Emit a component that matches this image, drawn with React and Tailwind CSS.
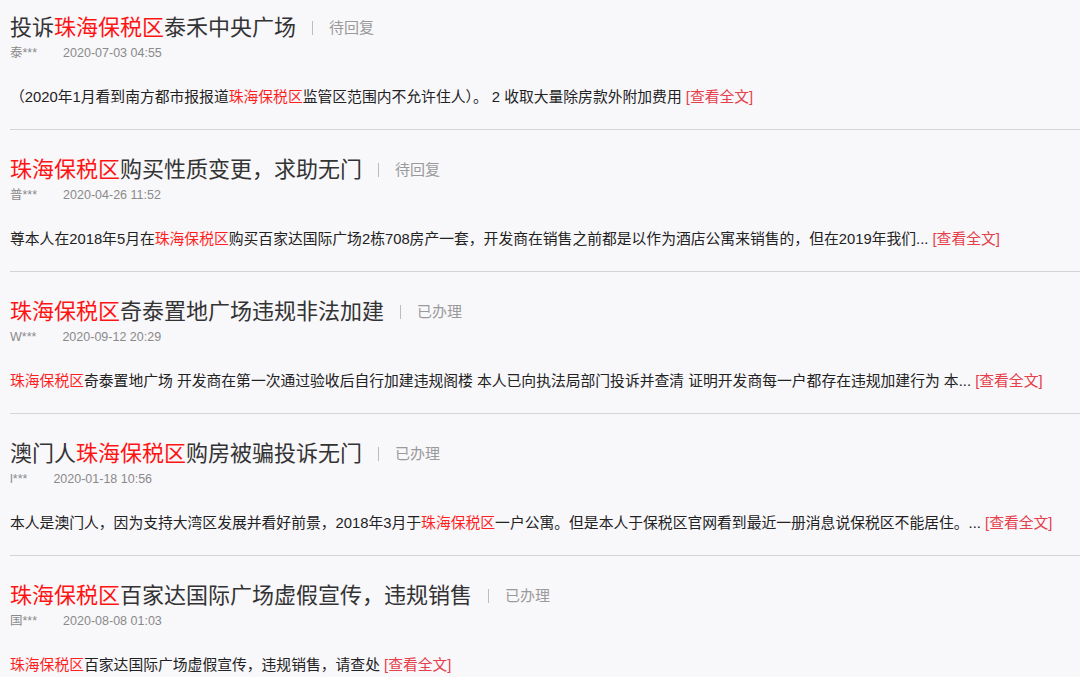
import React from 'react';

const KEY = '珠海保税区';

// 投诉列表数据
const ITEMS = [
  {
    title: ['投诉', KEY, '泰禾中央广场'],
    status: '待回复',
    user: '泰***',
    time: '2020-07-03 04:55',
    body: ['（2020年1月看到南方都市报报道', KEY, '监管区范围内不允许住人）。 2 收取大量除房款外附加费用 '],
  },
  {
    title: ['', KEY, '购买性质变更，求助无门'],
    status: '待回复',
    user: '普***',
    time: '2020-04-26 11:52',
    body: ['尊本人在2018年5月在', KEY, '购买百家达国际广场2栋708房产一套，开发商在销售之前都是以作为酒店公寓来销售的，但在2019年我们... '],
  },
  {
    title: ['', KEY, '奇泰置地广场违规非法加建'],
    status: '已办理',
    user: 'W***',
    time: '2020-09-12 20:29',
    body: ['', KEY, '奇泰置地广场 开发商在第一次通过验收后自行加建违规阁楼 本人已向执法局部门投诉并查清 证明开发商每一户都存在违规加建行为 本... '],
  },
  {
    title: ['澳门人', KEY, '购房被骗投诉无门'],
    status: '已办理',
    user: 'l***',
    time: '2020-01-18 10:56',
    body: ['本人是澳门人，因为支持大湾区发展并看好前景，2018年3月于', KEY, '一户公寓。但是本人于保税区官网看到最近一册消息说保税区不能居住。... '],
  },
  {
    title: ['', KEY, '百家达国际广场虚假宣传，违规销售'],
    status: '已办理',
    user: '国***',
    time: '2020-08-08 01:03',
    body: ['', KEY, '百家达国际广场虚假宣传，违规销售，请查处 '],
  },
];

function Item({ item, first }) {
  return (
    <div className={`${first ? 'pt-[13px]' : 'pt-[25px]'} pb-[22px] border-b border-[#d4d4d6]`}>
      <div className="flex items-center h-[30px] leading-[30px]">
        <span className="text-[22px] text-[#333333]">
          {item.title[0]}
          <span className="text-[#ff1414]">{item.title[1]}</span>
          {item.title[2]}
        </span>
        <span className="mx-[16px] w-px h-[14px] bg-[#bdbdbd]" />
        <span className="text-[15px] text-[#9a9a9a]">{item.status}</span>
      </div>
      <div className="mt-[2px] flex items-center h-4 leading-4 text-[12.5px] text-[#8a8a8a]">
        <span>{item.user}</span>
        <span className="ml-[26px]">{item.time}</span>
      </div>
      <p className="mt-[26px] h-5 leading-5 text-[14.8px] text-[#222222] whitespace-nowrap">
        {item.body[0]}
        <span className="text-[#ff1f1f]">{item.body[1]}</span>
        {item.body[2]}
        <span className="text-[#e5404a]">[查看全文]</span>
      </p>
    </div>
  );
}

export default function App() {
  return (
    <div
      className="w-[1080px] h-[677px] overflow-hidden bg-[#f8f7fa] pl-[10px]"
      style={{ fontFamily: '"Liberation Sans", "Noto Sans CJK SC", sans-serif' }}
    >
      {ITEMS.map((item, i) => (
        <Item key={i} item={item} first={i === 0} />
      ))}
    </div>
  );
}
